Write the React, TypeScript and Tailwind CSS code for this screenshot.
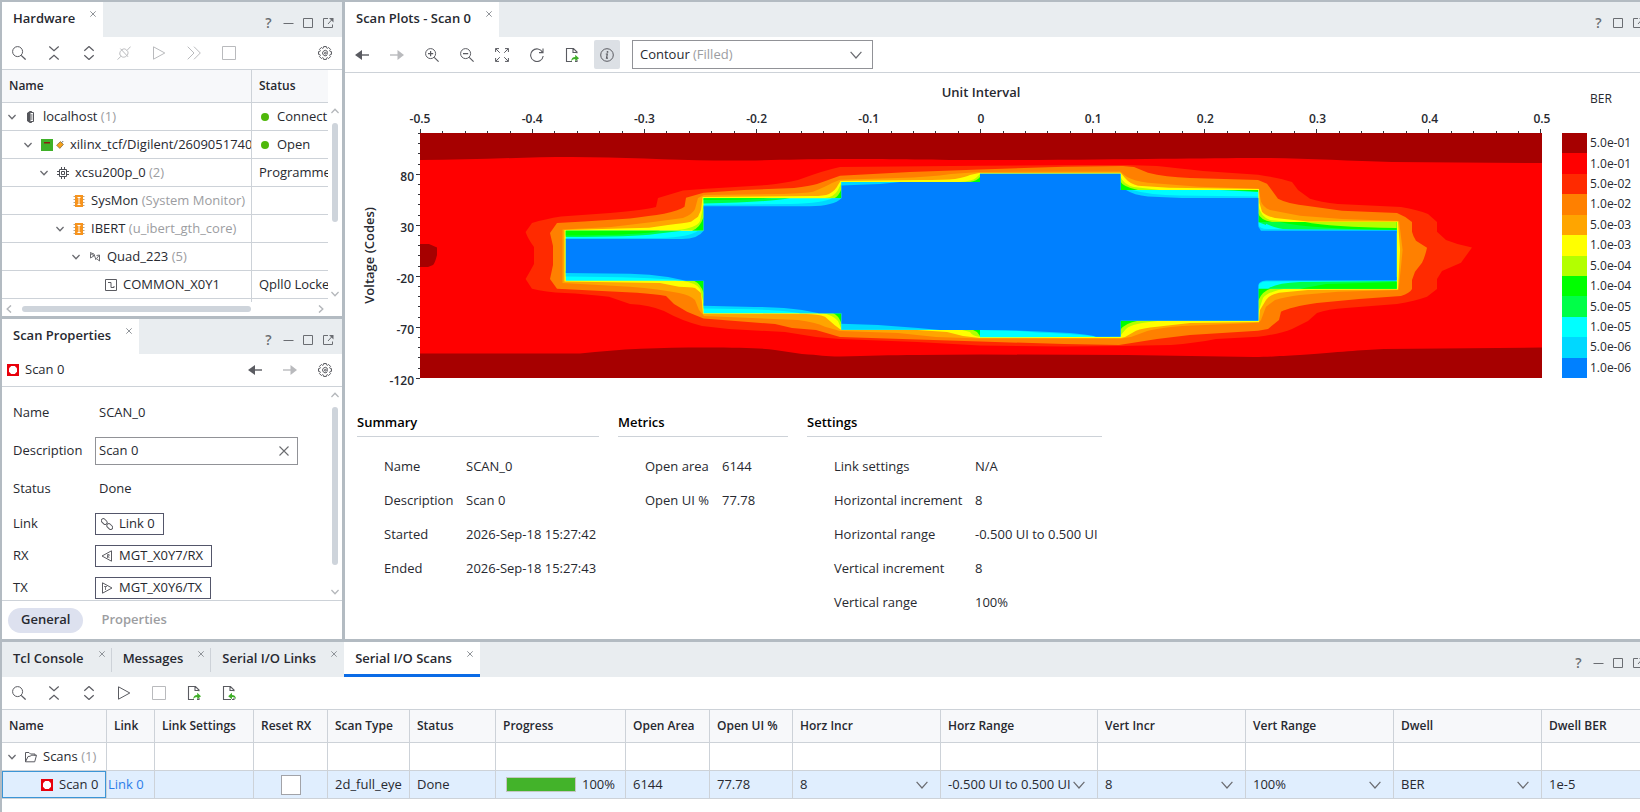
import React from "react";

type IconProps = { className?: string };

function Svg({
  size = 14,
  className = "text-[#5a5b61]",
  children,
}: IconProps & { size?: number; children: React.ReactNode }) {
  return (
    <svg
      width={size}
      height={size}
      viewBox={`0 0 ${size} ${size}`}
      fill="none"
      stroke="currentColor"
      className={`block shrink-0 ${className}`}
      aria-hidden="true"
    >
      {children}
    </svg>
  );
}

const SearchIcon = () => (
  <Svg>
    <circle cx="5.6" cy="5.6" r="5" />
    <path d="M9.2 9.4l4.4 4.2" strokeWidth="1.3" />
  </Svg>
);

const CollapseIcon = () => (
  <Svg>
    <path d="M2.3.5L7 4.7 11.7.5M2.3 13.5L7 9.3l4.7 4.2" strokeWidth="1.2" />
  </Svg>
);

const ExpandIcon = () => (
  <Svg>
    <path d="M2.3 4.7L7 .5l4.7 4.2M2.3 9.3L7 13.5l4.7-4.2" strokeWidth="1.2" />
  </Svg>
);

const UnlinkIcon = () => (
  <Svg className="text-[#b9babd]">
    <path d="M3.2 9.2C1.4 6.2 5.6 1.6 8.6 3.2l2.2 2.4c1.2 3-2.4 6.4-5.4 5.4L3.2 9.2M10 4.4L13.6.6M4 10.2L.6 13.6M3.4 2.6l7.600 8.200" />
  </Svg>
);

const PlayIcon = ({ className }: IconProps) => (
  <Svg className={className}>
    <path d="M1.5.8v12.4L12.8 7z" />
  </Svg>
);

const FastForwardIcon = () => (
  <Svg className="text-[#b9babd]">
    <path d="M.7.7L7 7 .7 13.3M7 .7L13.3 7 7 13.3" />
  </Svg>
);

const StopIcon = () => (
  <Svg className="text-[#b9babd]">
    <path d="M.5.5h13v13H.5z" />
  </Svg>
);

const gearPath =
  [0, 45, 90, 135, 180, 225, 270, 315]
    .flatMap((angle) =>
      [
        [-15, 5.4],
        [-12, 6.6],
        [12, 6.6],
        [15, 5.4],
      ].map(([offset, radius]) => {
        const rad = ((angle + offset) * Math.PI) / 180;
        return `${(7 + radius * Math.cos(rad)).toFixed(2)} ${(7 + radius * Math.sin(rad)).toFixed(2)}`;
      }),
    )
    .map((point, i) => (i === 0 ? `M${point}` : `L${point}`))
    .join("") + "Z";

const GearIcon = () => (
  <Svg>
    <path d={gearPath} />
    <path d="M9 9.2A2.7 2.7 0 1 1 9.2 5.2v3.400" />
    <circle cx="7.300" cy="7.200" r=".9" />
  </Svg>
);

const BackIcon = () => (
  <Svg>
    <path d="M6 7h8" strokeWidth="1.4" />
    <path d="M0 7l7-5v10z" fill="currentColor" stroke="none" />
  </Svg>
);

const ForwardIcon = () => (
  <Svg className="text-[#b9babd]">
    <path d="M0 7h8" strokeWidth="1.4" />
    <path d="M14 7L7.5 2v10z" fill="currentColor" stroke="none" />
  </Svg>
);

const ZoomInIcon = () => (
  <Svg>
    <circle cx="5.6" cy="5.6" r="5" />
    <path d="M9.2 9.4l4.4 4.2M3 5.6h5.2M5.6 3v5.2" strokeWidth="1.2" />
  </Svg>
);

const ZoomOutIcon = () => (
  <Svg>
    <circle cx="5.6" cy="5.6" r="5" />
    <path d="M9.2 9.4l4.4 4.2M3 5.6h5.2" strokeWidth="1.2" />
  </Svg>
);

const FitIcon = () => (
  <Svg>
    <path d="M.6 4V.6H4M.6.6l4.2 4.2M10 .6h3.4V4M13.4.6L9.2 4.8M.6 10v3.4H4M.6 13.4l4.2-4.2M10 13.4h3.4V10M13.4 13.4L9.2 9.2" />
  </Svg>
);

const RefreshIcon = () => (
  <Svg>
    <path d="M12.6 4.4A6.3 6.3 0 1 0 13.2 8M13 .6v4H9" strokeWidth="1.1" />
  </Svg>
);

const ExportIcon = () => (
  <Svg>
    <path d="M12 5.2V4L8.4.5H1.5v13H7M8 .5v4h4M12 12v1.5H10" strokeWidth="1.1" />
    <path
      d="M6.2 13.4c0-3 1.6-4.4 4-4.4V6.8L14 10.2l-3.8 3V11c-1.8 0-3 .8-4 2.4z"
      fill="#3fae29"
      stroke="none"
    />
  </Svg>
);

const ImportIcon = () => (
  <Svg>
    <path d="M12 5.2V4L8.4.5H1.5v13H9M8 .5v4h4M12 12v1.5H10" strokeWidth="1.1" />
    <path
      d="M14 13.4c0-3-1.6-4.4-4-4.4V6.8L6.2 10.2l3.8 3V11c1.8 0 3 .8 4 2.4z"
      fill="#3fae29"
      stroke="none"
    />
  </Svg>
);

const InfoIcon = () => (
  <Svg>
    <circle cx="7" cy="7" r="6.3" />
    <path d="M5.8 6h1.5l-.8 4.2H8" strokeWidth="1.2" />
    <circle cx="7.5" cy="3.9" r=".9" fill="currentColor" stroke="none" />
  </Svg>
);

const CloseIcon = ({ size = 6 }: { size?: number }) => (
  <svg width={size} height={size} viewBox="0 0 10 10" className="block shrink-0" aria-hidden="true">
    <path
      d="M.5.5l9 9M9.5.5l-9 9"
      stroke={size > 6 ? "#6b6c70" : "#8b8f94"}
      strokeWidth={size > 6 ? 1.1 : 1.6}
    />
  </svg>
);

function Chevron({ className = "text-[#6a6b70]", wide = false }: IconProps & { wide?: boolean }) {
  return (
    <svg
      width={wide ? 12 : 8}
      height={wide ? 8 : 6}
      viewBox={wide ? "0 0 12 8" : "0 0 8 6"}
      fill="none"
      stroke="currentColor"
      strokeWidth={wide ? 1.2 : 1.4}
      className={`block shrink-0 ${className}`}
      aria-hidden="true"
    >
      <path d={wide ? "M.6.8L6 7 11.4.8" : "M.4 1L4 4.8 7.6 1"} />
    </svg>
  );
}

const ServerIcon = () => (
  <Svg size={12} className="text-[#55565b]">
    <path d="M5 .5L2.5 2v8L5 11.5h1.5V.5z" fill="currentColor" />
    <path d="M5.5 1.5h3v9h-3M5.5 4h2M5.5 6h2M5.5 8h2" fill="white" />
  </Svg>
);

const BoardIcon = () => (
  <Svg size={12}>
    <path d="M0 0h12v12H0z" fill="#3fb128" stroke="none" />
    <path d="M3 3h6v1.5H3z" fill="#8c1d10" stroke="none" />
  </Svg>
);

const PlugIcon = () => (
  <Svg size={8}>
    <path d="M4.5.6L7.4 3.500 3.800 7.400.6 4.200z" fill="#f5a11c" stroke="#8a6d3c" strokeWidth=".8" />
    <path d="M5.500 1.500L7.500 0" stroke="#6a6b70" />
  </Svg>
);

const ChipIcon = () => (
  <Svg size={12} className="text-[#4d4e54]">
    <path d="M2.5 2.5h7v7h-7zM4.5 4.5h3v3h-3zM4.5 0v2.5M7.5 0v2.5M4.5 9.5V12M7.5 9.5V12M0 4.5h2.5M0 7.5h2.5M9.5 4.5H12M9.5 7.5H12" />
  </Svg>
);

const CoreIcon = () => (
  <Svg size={12}>
    <path d="M.5 1.5h2M.5 4.5h2M.5 7.5h2M.5 10.5h2M9.5 1.5h2M9.5 4.5h2M9.5 7.5h2M9.5 10.5h2" stroke="#b5a48c" />
    <path d="M2 0h8v12H2z" fill="#f7941d" stroke="none" />
    <path d="M4.5 2.5h3M6 2.5v7M4.5 9.5h3" stroke="white" />
  </Svg>
);

const QuadIcon = () => (
  <Svg size={12} className="text-[#6a6b70]">
    <path d="M1.5 2.5v4.500l3.500-2.200zM5 3l2 6M10.500 4v6L7.500 7.500zM1 1.500l4 1.500M7.500 4.500l3-.5" />
  </Svg>
);

const CommonIcon = () => (
  <Svg size={12}>
    <path d="M.5.5h11v11H.5z" />
    <path d="M3 3.5h3v5h3V7" />
  </Svg>
);

const ScanIcon = () => (
  <Svg size={12}>
    <path d="M0 0h12v12H0z" fill="#e8000b" stroke="none" />
    <path d="M4.2 2h3.6L10 4.2v3.6L7.8 10H4.2L2 7.800V4.200z" fill="white" stroke="none" />
  </Svg>
);

const FolderIcon = () => (
  <Svg size={12}>
    <path d="M.5 10.8V1.5H4L5.5 3H10v2M.5 10.8L3 5.5l2.5-.3.7-1h5.3l-1.800 6.600z" />
  </Svg>
);

const LinkIcon = () => (
  <Svg size={12}>
    <rect x="0" y="1.5" width="6.5" height="4" rx="2" transform="rotate(45 3.2 3.5)" />
    <rect x="5.5" y="6.5" width="6.5" height="4" rx="2" transform="rotate(45 8.700 8.500)" />
  </Svg>
);

const RxIcon = () => (
  <Svg size={12}>
    <path d="M10.5.8v10.400L1 6z" />
    <path d="M6.500 8V4.500h1.600v1.600H6.500l2 2" strokeWidth=".8" />
  </Svg>
);

const TxIcon = () => (
  <Svg size={12}>
    <path d="M1.500.8v10.400L11 6z" />
    <path d="M3 4.500h3M4.500 4.500V8" strokeWidth=".8" />
  </Svg>
);

function IconButton({
  label,
  disabled,
  active,
  children,
}: {
  label: string;
  disabled?: boolean;
  active?: boolean;
  children: React.ReactNode;
}) {
  return (
    <button
      type="button"
      aria-label={label}
      disabled={disabled}
      className={`flex h-[29px] w-[26px] shrink-0 items-center justify-center rounded-xs ${active ? "bg-[#dce0e5]" : ""}`}
    >
      {children}
    </button>
  );
}

function WindowControls({ minimize = true }: { minimize?: boolean }) {
  return (
    <div className="flex items-center gap-[9px] pt-[7px] text-[#6a6d72]">
      <button type="button" aria-label="Help" className="w-[11px] text-center text-sm leading-4 font-semibold">
        ?
      </button>
      {minimize ? (
        <button type="button" aria-label="Minimize">
          <Svg size={11} className="text-[#6a6d72]">
            <path d="M.5 5.5h10" />
          </Svg>
        </button>
      ) : null}
      <button type="button" aria-label="Maximize">
        <Svg size={11} className="text-[#6a6d72]">
          <path d="M.5.5h9v9h-9z" />
        </Svg>
      </button>
      <button type="button" aria-label="Float">
        <Svg size={11} className="text-[#6a6d72]">
          <path d="M5 .5H.5v9h9V6.500M5 6l4-4.500" />
          <path d="M6 0h4.500v4.500z" fill="currentColor" stroke="none" />
        </Svg>
      </button>
    </div>
  );
}

function Tab({
  title,
  active,
  underline,
  divider,
}: {
  title: string;
  active?: boolean;
  underline?: boolean;
  divider?: boolean;
}) {
  return (
    <div
      className={`relative flex h-[35px] items-start pr-[7px] pl-[11px] ${active ? "bg-white" : ""} ${underline ? "border-b-3 border-[#0a6be6]" : ""}`}
    >
      <button type="button" className="mt-[7px] text-[13px] leading-[18px] font-semibold whitespace-nowrap">
        {title}
      </button>
      <button type="button" aria-label={`Close ${title}`} className="mt-[9px] ml-[15px]">
        <CloseIcon />
      </button>
      {divider ? <span className="absolute top-[6px] right-0 h-6 w-px bg-[#cdd2d8]" /> : null}
    </div>
  );
}

function TabBar({
  children,
  minimize,
  overflow,
}: {
  children: React.ReactNode;
  minimize?: boolean;
  overflow?: boolean;
}) {
  return (
    <div className="flex h-[35px] justify-between overflow-hidden bg-[#e9edf0]">
      <div className="flex">{children}</div>
      <div className={overflow ? "-mr-1 flex shrink-0" : "mr-[8px] flex shrink-0"}>
        <WindowControls minimize={minimize} />
      </div>
    </div>
  );
}

function VerticalScrollbar({ thumb }: { thumb: string }) {
  return (
    <div className="flex w-[14px] shrink-0 flex-col items-center py-[5px]">
      <Chevron className="rotate-180 text-[#b4b7bb]" />
      <div className="flex grow flex-col pt-[9px]">
        <div className={`w-[6px] rounded-full bg-[#ced4db] ${thumb}`} />
      </div>
      <Chevron className="text-[#b4b7bb]" />
    </div>
  );
}

type TreeRow = {
  name: string;
  detail?: string;
  indent: string;
  open?: boolean;
  icon: React.ReactNode;
  status?: string;
  dot?: boolean;
};

const hardwareRows: TreeRow[] = [
  { name: "localhost", detail: "(1)", indent: "pl-[6px]", open: true, icon: <ServerIcon />, status: "Connect", dot: true },
  {
    name: "xilinx_tcf/Digilent/26090517404",
    indent: "pl-[22px]",
    open: true,
    icon: (
      <span className="flex items-center gap-[3px]">
        <BoardIcon />
        <PlugIcon />
      </span>
    ),
    status: "Open",
    dot: true,
  },
  { name: "xcsu200p_0", detail: "(2)", indent: "pl-[38px]", open: true, icon: <ChipIcon />, status: "Programme" },
  { name: "SysMon", detail: "(System Monitor)", indent: "pl-[54px]", icon: <CoreIcon /> },
  { name: "IBERT", detail: "(u_ibert_gth_core)", indent: "pl-[54px]", open: true, icon: <CoreIcon /> },
  { name: "Quad_223", detail: "(5)", indent: "pl-[70px]", open: true, icon: <QuadIcon /> },
  { name: "COMMON_X0Y1", indent: "pl-[86px]", icon: <CommonIcon />, status: "Qpll0 Locke" },
];

function HardwarePanel() {
  return (
    <section className="bg-white">
      <TabBar>
        <Tab title="Hardware" active />
      </TabBar>
      <div className="flex h-[33px] items-center justify-between border-b border-[#cdd2d8] px-1">
        <div className="flex gap-[9px]">
          <IconButton label="Search"><SearchIcon /></IconButton>
          <IconButton label="Collapse all"><CollapseIcon /></IconButton>
          <IconButton label="Expand all"><ExpandIcon /></IconButton>
          <IconButton label="Disconnect" disabled><UnlinkIcon /></IconButton>
          <IconButton label="Run" disabled><PlayIcon className="text-[#b9babd]" /></IconButton>
          <IconButton label="Run immediate" disabled><FastForwardIcon /></IconButton>
          <IconButton label="Stop" disabled><StopIcon /></IconButton>
        </div>
        <IconButton label="Settings"><GearIcon /></IconButton>
      </div>
      <div className="flex">
        <div className="min-w-0 grow">
          <table className="w-full table-fixed border-separate border-spacing-0 text-left text-[13px] whitespace-nowrap">
            <thead className="bg-[#f7f8fa] text-xs">
              <tr className="h-[33px]">
                <th className="w-[250px] border-r border-b border-[#cdd2d8] pl-[7px] font-semibold">Name</th>
                <th className="border-b border-[#cdd2d8] pl-[7px] font-semibold">Status</th>
              </tr>
            </thead>
            <tbody>
              {hardwareRows.map((row) => (
                <tr key={row.name} className="h-7">
                  <td className="overflow-hidden border-r border-b border-[#cdd2d8] p-0">
                    <div className={`flex items-center gap-[6px] ${row.indent}`}>
                      <span className="flex w-[11px] shrink-0">{row.open ? <Chevron /> : null}</span>
                      {row.icon}
                      <span>
                        {row.name} {row.detail ? <span className="text-[#9c9da1]">{row.detail}</span> : null}
                      </span>
                    </div>
                  </td>
                  <td className="overflow-hidden border-b border-[#cdd2d8] p-0 pl-[7px]">
                    <span className="flex items-center">
                      {row.dot ? <span className="mr-[8px] ml-[2px] size-2 shrink-0 rounded-full bg-[#4fb80a]" /> : null}
                      {row.status}
                    </span>
                  </td>
                </tr>
              ))}
            </tbody>
          </table>
          <div className="h-[3px] w-[250px] border-r border-[#cdd2d8]" />
        </div>
        <div className="flex pt-[33px]">
          <VerticalScrollbar thumb="h-[99px]" />
        </div>
      </div>
      <div className="flex h-[14px] items-center pr-[17px] pl-[3px]">
        <Chevron className="rotate-90 text-[#b4b7bb]" />
        <div className="grow px-[9px]">
          <div className="h-[6px] w-4/5 rounded-full bg-[#ced4db]" />
        </div>
        <Chevron className="-rotate-90 text-[#b4b7bb]" />
      </div>
    </section>
  );
}

function LinkedObject({ label, name, icon }: { label: string; name: string; icon: React.ReactNode }) {
  return (
    <div className="flex h-8 shrink-0 items-center">
      <span className="w-[82px]">{label}</span>
      <button
        type="button"
        aria-label={`${label} ${name}`}
        className="flex h-[22px] items-center gap-[6px] border border-[#54566a] pr-[8px] pl-[5px]"
      >
        {icon}
        {name}
      </button>
    </div>
  );
}

function PropertiesPanel() {
  return (
    <section className="bg-white">
      <TabBar>
        <Tab title="Scan Properties" active />
      </TabBar>
      <div className="flex h-[33px] items-center border-b border-[#cdd2d8] pr-1 pl-[5px]">
        <ScanIcon />
        <span className="ml-[6px] grow text-[13px]">Scan 0</span>
        <div className="flex gap-[9px]">
          <IconButton label="Back"><BackIcon /></IconButton>
          <IconButton label="Forward" disabled><ForwardIcon /></IconButton>
          <IconButton label="Settings"><GearIcon /></IconButton>
        </div>
      </div>
      <div className="flex h-[213px] overflow-hidden">
        <div className="flex grow flex-col pt-[7px] pl-[11px] text-[13px]">
          <div className="flex h-[38px] shrink-0 items-center">
            <span className="w-[86px]">Name</span>
            <span>SCAN_0</span>
          </div>
          <div className="flex h-[38px] shrink-0 items-center">
            <label htmlFor="description" className="w-[82px]">
              Description
            </label>
            <div className="flex h-7 w-[203px] items-center border border-[#919297] pr-2">
              <input id="description" defaultValue="Scan 0" className="min-w-0 grow pl-[3px] outline-none" />
              <button type="button" aria-label="Clear description">
                <CloseIcon size={10} />
              </button>
            </div>
          </div>
          <div className="flex h-[38px] shrink-0 items-center">
            <span className="w-[86px]">Status</span>
            <span>Done</span>
          </div>
          <LinkedObject label="Link" name="Link 0" icon={<LinkIcon />} />
          <LinkedObject label="RX" name="MGT_X0Y7/RX" icon={<RxIcon />} />
          <LinkedObject label="TX" name="MGT_X0Y6/TX" icon={<TxIcon />} />
        </div>
        <VerticalScrollbar thumb="h-[158px]" />
      </div>
      <div className="flex h-[39px] items-center border-t border-[#cdd2d8] pl-[6px] text-[13px] font-semibold">
        <button type="button" className="h-[25px] rounded-full bg-[#dde1ef] px-[13px]">
          General
        </button>
        <button type="button" className="px-[18px] text-[#9c9da1]">
          Properties
        </button>
      </div>
    </section>
  );
}

const legend = [
  ["5.0e-01", "bg-[#a60000]"],
  ["1.0e-01", "bg-[#ff0000]"],
  ["5.0e-02", "bg-[#ff2a00]"],
  ["1.0e-02", "bg-[#ff8000]"],
  ["5.0e-03", "bg-[#ffa500]"],
  ["1.0e-03", "bg-[#ffff00]"],
  ["5.0e-04", "bg-[#b3ff00]"],
  ["1.0e-04", "bg-[#00ff00]"],
  ["5.0e-05", "bg-[#00ff48]"],
  ["1.0e-05", "bg-[#00ffff]"],
  ["5.0e-06", "bg-[#00d8ff]"],
  ["1.0e-06", "bg-[#0080ff]"],
];

// Eye contour, painted from the worst error rate inwards to the open area.
function EyeContour() {
  return (
    <svg
      viewBox="0 0 1122 245"
      preserveAspectRatio="none"
      className="block h-[245px] w-full"
      role="img"
      aria-label="Eye scan contour"
    >
      <path fill="#ff0000" d="M0 0h1122v245H0z" />
      <path
        fill="#a60000"
        d="M0 0H1122V30L972 29C930 28 880 25 838 25C780 25 700 27 561 27C500 27 470 26 420 26C370 26 340 28 294 27.5C250 27 200 24 152 24C100 24 50 27 0 27Z"
      />
      <path
        fill="#a60000"
        d="M0 245V220.500L160 220.500C200 216 240 214.500 285 214.500C320 214.500 340 215 355 217L382 221C400 222 405 223.500 420 223.500C450 223 470 222 497 222L561 221.500L707 222L834 224C850 224 860 223 880 222C920 219 940 217 964 216L1122 214.500V245Z"
      />
      <path fill="#a60000" d="M0 111H9L17 114.500V122Q15 130 13 132L8 134H0Z" />
      <path
        fill="#ff2a00"
        d="M105.600 99L112 90Q125 86 141 83.500L190 80Q225 77 236 74L238 65L263 57.500L286 55.700L347 52Q365 50 378 47Q405 37 420 34L560 32.700L665 32L707 32L737 33Q755 35 783 38L838 41.700Q860 45 872 49L878 57L890 65.700Q900 69 918 71L981 74Q998 77 1008 81L1017 89V98.700L1026 107Q1038 112 1052 114.500L1041 129.700L1022 138L1017 146V156L1007 163.700Q995 168 977 171L926 175Q908 176 897 180L888 188L872 196Q860 201 838 203.700L796 206Q775 210 751 212L699 213L644 213.500L560 212.500L497 209L420 206L396 204L365 199L309 196L282 193Q262 188 244 178Q230 172 210 171L189 163.700Q165 161 145 160Q125 159 112 155.700L105.600 146Q112 135 114 131V114Q108 106 105.600 99Z"
      />
      <path
        fill="#ff8000"
        d="M130 100L137 90L164 88.500L210 85.500Q230 83 244 80.700Q260 77 264.500 73.700L266 64.700L283.600 59.700L324 57L374 55Q390 53 397 51L420 42.700L490 39L560 36.500L644 33.700L703 33L714 34L728 39.700Q745 44 770 45L838 47L847 50.700L858 65.700Q868 71 888 73L922 77.700L977 80Q985 83 992 89V98.700Q993 103 996 107.700L1007 114.700Q1005 124 1002 129.700L995 138.700L992 147V156Q990 160 981 163L939 166L897 170Q870 174 861 178.700L859 187L848 196L838 197.700L770 202L737 206L699 212L644 211L560 208.500L420 204L396 197L372 195L355 191L283.600 185.500Q275 182 267 178.700L254 171L246 163Q235 161 217 159.700L137 155.700L130 146L133 132V113Z"
      />
      <path
        fill="#ffa500"
        d="M142.500 96.500L191 94L233 89L263 85Q273 81 275 76L278 65L284 62L363 61Q385 60 393 58.700Q405 54 412 50L420 46.700L478 45Q510 44 531 41L560 39L700 38.500L707 44Q714 48 728 49.700L779 53.700L838.600 55.700L841 68.700Q843 74 850 77L880 82.700L922 86L979 88L981 103.700L982.600 117L981 133.700L978.500 157L918 158.700L880 162Q865 164 855 167L846 173.700L841 187L838.600 189.700L762 193Q738 195 728 197.700L711.500 203.700L700.600 205.700L560 205.500L516 204L478 200L420 198L405 193.700Q395 189 378 187L284 183L279 177L275 167Q270 162 259 160Q240 156 210 153.700L142.500 150Z"
      />
      <path
        fill="#ffff00"
        d="M144.500 97L229 94.700L248 92Q265 90 271 88.700L278 83.700L281 77L282.600 64L393 63Q404 63 409 61Q416 57 418 52L420.500 48L500 47Q525 47 535 46Q546 44 550 42L559 40L700.600 39.700L705 45Q710 51 718 52.700L749 54.700L839 56L839.500 70L842 78.700Q846 83 855 85L888 88.500L978 88.500L980 117L978 156.500L888 157L859 159.700Q849 162 846 167L840 177L839 189L770 190L737 193.700Q722 195 716 197.700L705 204L700.600 205H560L543 203L527 199L497 197L420.500 196.500L414.500 192L405 183.700Q398 181 386 181L283 180.700L281 160L275 155Q270 154 259 153.700L240 150L144.500 148.500Z"
      />
      {/* steep corners of the staircase */}
      <path
        fill="#b3ff00"
        d="M257 97Q277 95 280 88L283.600 72V97ZM405 65Q414 64 418 57L421.400 50V65ZM540 49Q552 48 556 45L560 41V49ZM700 43Q704 52 714 54L740 57H700ZM838 72Q841 84 850 87L870 89H838ZM838 155H870Q848 158 843 165L838 180ZM700 187.700H740Q712 190 706 196L700 203ZM560 204Q552 203 550 199L540 196.500H560ZM421.400 196L418 188Q413 182 402 180H421.400ZM283.600 170L280 156Q277 150 262 147.700H283.600Z"
      />
      <path
        fill="#00ff00"
        d="M272 97.700Q280 95 283.600 84V97.700ZM414 65.500Q419 63 421.400 56V65.500ZM550 49Q557 48 560 44V49ZM700 48Q703 54 718 57H700ZM838 80Q840 87 852 89H838ZM838 155H852Q842 158 838 168ZM700 187.700H718Q705 190 700 197ZM560 203L557 199L552 196.500H560ZM421.400 190Q418 182 413 180H421.400ZM283.600 160Q281 151 274 147.700H283.600Z"
      />
      <path
        fill="#00ffff"
        d="M145.800 97.700H283.600V65.300H421.400V49H560V40.700H700.600V57H838.400V89H976.700V155.700H838.400V187.700H700.600V203.700L560 204.300V196.700H421.400V180.300H283.600V147.700H145.800Z"
      />
      <path
        fill="#00ff48"
        d="M145.800 97.700H262L235 101Q215 104 145.800 104ZM283.600 65.300H370Q350 69 283.600 70.500ZM800 57H838V59ZM843 89H976.700V97L870 97Q852 95 843 89ZM848 155.700Q856 150 880 149L976.700 148V155.700ZM838 89H846V92Z"
      />
      <path
        fill="#00ff00"
        d="M145.800 97.700H240Q225 102 145.800 102.500ZM283.600 65.300H352Q330 67 283.600 67ZM815 57H838V58.500ZM860 89H976.700V97Q890 96 860 89ZM880 155.700L906 151L976.700 149V155.700Z"
      />
      <path fill="#b3ff00" d="M885 89H976.700V95Q910 94 885 89Z" />
      <path
        fill="#00d8ff"
        d="M145.800 105H240Q270 104 278 97.700H283.600V107H145.800ZM283.600 72L370 71Q405 70 412 65.300H421.400V76H283.600ZM421.400 49H500V53H421.400ZM700 57H712Q730 62 760 62.500L838 63.500V68H700ZM838 91Q839 96 848 96L977 97V100H838ZM838 155Q838 149 846 148.500L977 147V144H838ZM560 195L620 199.700Q660 201 676 203.700H690V190H560ZM421.400 188V196.700H520V190ZM283.600 170V175.500Q360 176 380 180.300H421.400V170ZM145.800 138V143.500Q230 144 262 147.700H283.600V138Z"
      />
      <path
        fill="#0080ff"
        d="M145.800 106H262Q278 106 283.600 97.700V73.300H390Q414 73 421.400 65.300V52.500L460 51L480 49H560V40.700H700.600V57H706Q714 62 728 63.500L762 65H838.400V93.700L841 97.700H976.700V147.500H846Q839 148 838.400 152V187.700H700.600V203.700H676Q668 201 644 199.700Q600 197 560 197H520L498 195L458 192L421.400 190.700V180.300H399L382 177Q360 174 324.500 173.700L283.600 172.700V147.700H266L248 144Q230 141 210 140.700L145.800 140Z"
      />
    </svg>
  );
}

function ScanPlot() {
  return (
    <div className="flex text-[13px] leading-[18px]">
      <div className="mt-[60px] flex h-[245px] w-[75px] shrink-0 justify-end font-semibold">
        <div className="flex w-[44px] items-center justify-center pl-1">
          <span className="rotate-180 whitespace-nowrap [writing-mode:vertical-rl]">Voltage (Codes)</span>
        </div>
        <div className="-mb-[3px] flex w-[27px] flex-col items-end justify-between pt-[44px] pr-[2px] text-xs">
          {["80", "30", "-20", "-70", "-120"].map((label) => (
            <span key={label} className="flex h-0 items-center">
              {label}
            </span>
          ))}
        </div>
        <div className="-mb-px flex w-1 flex-col items-end justify-between">
          {Array.from({ length: 25 }, (_, i) => (
            <span key={i} className={`h-px bg-[#33343b] ${i % 5 === 4 ? "w-1" : "w-[2px]"}`} />
          ))}
        </div>
      </div>
      <div className="min-w-0 grow pt-[10px] font-semibold">
        <div className="text-center">Unit Interval</div>
        <div className="mt-[9px] flex h-[18px] items-center justify-between text-xs">
          {["-0.5", "-0.4", "-0.3", "-0.2", "-0.1", "0", "0.1", "0.2", "0.3", "0.4", "0.5"].map((label) => (
            <span key={label} className="flex w-0 justify-center">
              {label}
            </span>
          ))}
        </div>
        <div className="mt-px flex h-1 items-end justify-between">
          {Array.from({ length: 51 }, (_, i) => (
            <span key={i} className={`w-px bg-[#33343b] ${i % 5 === 0 ? "h-1" : "h-[2px]"}`} />
          ))}
        </div>
        <EyeContour />
      </div>
      <div className="w-[98px] shrink-0 pt-[17px] pl-5 text-xs">
        <div className="mb-[25px] pl-[28px] leading-[18px]">BER</div>
        <ul className="flex h-[245px] flex-col">
          {legend.map(([label, color]) => (
            <li key={label} className="flex min-h-0 flex-1 items-center gap-[3px]">
              <span className={`h-full w-[25px] ${color}`} />
              {label}
            </li>
          ))}
        </ul>
      </div>
    </div>
  );
}

function Facts({
  title,
  width,
  labelWidth,
  rows,
}: {
  title: string;
  width: string;
  labelWidth: string;
  rows: [string, string][];
}) {
  return (
    <section className={width}>
      <h2 className="h-6 border-b border-[#cdd2d8] text-[13px] leading-[18px] font-semibold text-black">{title}</h2>
      <dl className="pt-[13px] pl-[27px] text-[13px] whitespace-nowrap">
        {rows.map(([label, value]) => (
          <div key={label} className="flex h-[34px] items-center">
            <dt className={labelWidth}>{label}</dt>
            <dd>{value}</dd>
          </div>
        ))}
      </dl>
    </section>
  );
}

function PlotPanel() {
  return (
    <section className="min-w-0 bg-white">
      <TabBar minimize={false} overflow>
        <Tab title="Scan Plots - Scan 0" active />
      </TabBar>
      <div className="flex h-9 items-center gap-[9px] border-b border-[#cdd2d8] pl-1">
        <IconButton label="Back"><BackIcon /></IconButton>
        <IconButton label="Forward" disabled><ForwardIcon /></IconButton>
        <IconButton label="Zoom in"><ZoomInIcon /></IconButton>
        <IconButton label="Zoom out"><ZoomOutIcon /></IconButton>
        <IconButton label="Zoom fit"><FitIcon /></IconButton>
        <IconButton label="Refresh"><RefreshIcon /></IconButton>
        <IconButton label="Export"><ExportIcon /></IconButton>
        <IconButton label="Show details" active><InfoIcon /></IconButton>
        <div className="relative ml-[3px] h-[29px] w-[241px] text-[13px]">
          <select
            aria-label="Plot type"
            className="h-full w-full appearance-none border border-[#919297] bg-white pl-[7px]"
          >
            <option>Contour</option>
          </select>
          <span className="pointer-events-none absolute inset-y-0 right-[11px] left-[61px] flex items-center justify-between text-[#9c9da1]">
            (Filled)
            <Chevron wide />
          </span>
        </div>
      </div>
      <ScanPlot />
      <div className="mt-[35px] flex gap-[19px] pl-3">
        <Facts
          title="Summary"
          width="w-[242px]"
          labelWidth="w-[82px]"
          rows={[
            ["Name", "SCAN_0"],
            ["Description", "Scan 0"],
            ["Started", "2026-Sep-18 15:27:42"],
            ["Ended", "2026-Sep-18 15:27:43"],
          ]}
        />
        <Facts
          title="Metrics"
          width="w-[170px]"
          labelWidth="w-[77px]"
          rows={[
            ["Open area", "6144"],
            ["Open UI %", "77.78"],
          ]}
        />
        <Facts
          title="Settings"
          width="w-[295px]"
          labelWidth="w-[141px]"
          rows={[
            ["Link settings", "N/A"],
            ["Horizontal increment", "8"],
            ["Horizontal range", "-0.500 UI to 0.500 UI"],
            ["Vertical increment", "8"],
            ["Vertical range", "100%"],
          ]}
        />
      </div>
    </section>
  );
}

function CellSelect({ label, value }: { label: string; value: string }) {
  return (
    <div className="relative flex items-center">
      <select aria-label={label} className="w-full appearance-none bg-transparent">
        <option>{value}</option>
      </select>
      <span className="pointer-events-none absolute right-[12px]">
        <Chevron wide />
      </span>
    </div>
  );
}

const scanColumns = [
  ["Name", "w-[105px]"],
  ["Link", "w-[48px]"],
  ["Link Settings", "w-[99px]"],
  ["Reset RX", "w-[74px]"],
  ["Scan Type", "w-[82px]"],
  ["Status", "w-[86px]"],
  ["Progress", "w-[130px]"],
  ["Open Area", "w-[84px]"],
  ["Open UI %", "w-[83px]"],
  ["Horz Incr", "w-[148px]"],
  ["Horz Range", "w-[157px]"],
  ["Vert Incr", "w-[148px]"],
  ["Vert Range", "w-[148px]"],
  ["Dwell", "w-[148px]"],
  ["Dwell BER", ""],
];

const cell = "border-r border-b border-[#cdd2d8] p-0 pl-[7px] last:border-r-0";

function ScansPanel() {
  return (
    <section className="min-w-0 grow bg-white">
      <TabBar overflow>
        <Tab title="Tcl Console" divider />
        <Tab title="Messages" divider />
        <Tab title="Serial I/O Links" />
        <Tab title="Serial I/O Scans" active underline />
      </TabBar>
      <div className="flex h-[33px] items-center gap-[9px] border-b border-[#cdd2d8] pl-1">
        <IconButton label="Search"><SearchIcon /></IconButton>
        <IconButton label="Collapse all"><CollapseIcon /></IconButton>
        <IconButton label="Expand all"><ExpandIcon /></IconButton>
        <IconButton label="Run"><PlayIcon /></IconButton>
        <IconButton label="Stop" disabled><StopIcon /></IconButton>
        <IconButton label="Export"><ExportIcon /></IconButton>
        <IconButton label="Import"><ImportIcon /></IconButton>
      </div>
      <table className="w-full table-fixed border-separate border-spacing-0 text-left text-[13px] whitespace-nowrap">
        <thead className="bg-[#f7f8fa] text-xs">
          <tr className="h-[33px]">
            {scanColumns.map(([title, width]) => (
              <th key={title} className={`${cell} ${width} font-semibold`}>
                {title}
              </th>
            ))}
          </tr>
        </thead>
        <tbody>
          <tr className="h-7">
            <td className="border-r border-b border-[#cdd2d8] p-0">
              <div className="flex items-center gap-[6px] pl-[6px]">
                <span className="flex w-[11px]">
                  <Chevron />
                </span>
                <FolderIcon />
                <span>
                  Scans <span className="text-[#9c9da1]">(1)</span>
                </span>
              </div>
            </td>
            {scanColumns.slice(1).map(([title]) => (
              <td key={title} className={cell} />
            ))}
          </tr>
          <tr className="h-7 bg-[#e0eefe]">
            <td className="border-r border-b border-[#cdd2d8] p-0">
              <div className="flex h-[27px] items-center gap-[6px] border border-[#3c95d6] pl-[38px]">
                <ScanIcon />
                Scan 0
              </div>
            </td>
            <td className="border-r border-b border-[#cdd2d8] p-0 pl-px">
              <a href="#link-0" className="text-[#2b7de9]">
                Link 0
              </a>
            </td>
            <td className={cell} />
            <td className="border-r border-b border-[#cdd2d8] p-0">
              <input
                type="checkbox"
                aria-label="Reset RX"
                className="mx-auto block size-5 appearance-none border border-[#a2a3a8] bg-white"
              />
            </td>
            <td className={cell}>2d_full_eye</td>
            <td className={cell}>Done</td>
            <td className={cell}>
              <div className="flex items-center gap-[6px] pl-[3px]">
                <div className="h-[15px] w-[70px] border border-[#c4c7c2] bg-white">
                  <div className="h-full w-full bg-[#43b32a]" />
                </div>
                100%
              </div>
            </td>
            <td className={cell}>6144</td>
            <td className={cell}>77.78</td>
            <td className={cell}><CellSelect label="Horz Incr" value="8" /></td>
            <td className={cell}><CellSelect label="Horz Range" value="-0.500 UI to 0.500 UI" /></td>
            <td className={cell}><CellSelect label="Vert Incr" value="8" /></td>
            <td className={cell}><CellSelect label="Vert Range" value="100%" /></td>
            <td className={cell}><CellSelect label="Dwell" value="BER" /></td>
            <td className={cell}>1e-5</td>
          </tr>
        </tbody>
      </table>
    </section>
  );
}

export default function App() {
  return (
    <div className="flex min-h-screen flex-col gap-[3px] overflow-hidden bg-[#b3bbc2] pt-[2px] pl-[2px] font-['Open_Sans',sans-serif] text-[#272930]">
      <div className="grid grid-cols-[340px_minmax(0,1fr)] gap-[3px]">
        <div className="flex flex-col gap-[3px]">
          <HardwarePanel />
          <PropertiesPanel />
        </div>
        <PlotPanel />
      </div>
      <ScansPanel />
    </div>
  );
}
